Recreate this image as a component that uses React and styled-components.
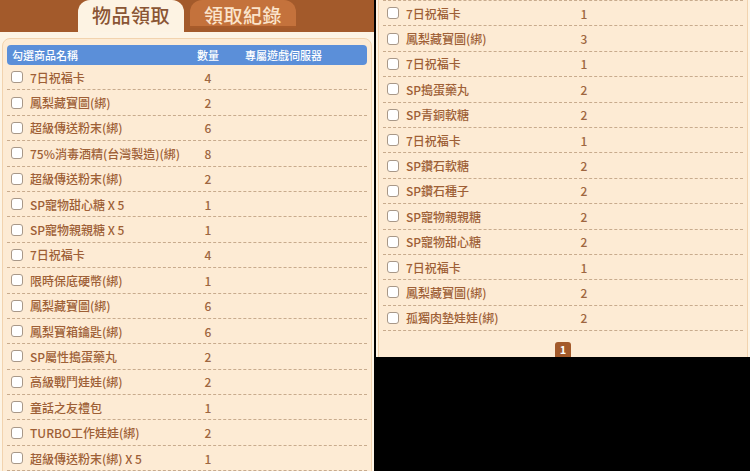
import styled, { createGlobalStyle } from "styled-components"

const GlobalStyle = createGlobalStyle`
  html, body {
    margin: 0;
    padding: 0;
    background: #000;
  }
  body {
    font-family: "Noto Sans CJK TC", "Noto Sans", sans-serif;
  }
`

const firstPage = [
  ["7日祝福卡", 4],
  ["鳳梨藏寶圖(綁)", 2],
  ["超級傳送粉末(綁)", 6],
  ["75%消毒酒精(台灣製造)(綁)", 8],
  ["超級傳送粉末(綁)", 2],
  ["SP寵物甜心糖 X 5", 1],
  ["SP寵物親親糖 X 5", 1],
  ["7日祝福卡", 4],
  ["限時保底硬幣(綁)", 1],
  ["鳳梨藏寶圖(綁)", 6],
  ["鳳梨寶箱鑰匙(綁)", 6],
  ["SP屬性搗蛋藥丸", 2],
  ["高級戰鬥娃娃(綁)", 2],
  ["童話之友禮包", 1],
  ["TURBO工作娃娃(綁)", 2],
  ["超級傳送粉末(綁) X 5", 1],
]

const lastPage = [
  ["7日祝福卡", 1],
  ["鳳梨藏寶圖(綁)", 3],
  ["7日祝福卡", 1],
  ["SP搗蛋藥丸", 2],
  ["SP青銅軟糖", 2],
  ["7日祝福卡", 1],
  ["SP鑽石軟糖", 2],
  ["SP鑽石種子", 2],
  ["SP寵物親親糖", 2],
  ["SP寵物甜心糖", 2],
  ["7日祝福卡", 1],
  ["鳳梨藏寶圖(綁)", 2],
  ["孤獨肉墊娃娃(綁)", 2],
]

const Screen = styled.div`
  width: 750px;
  height: 471px;
  display: flex;
  align-items: flex-start;
  gap: 2px;
  background: #000;
  overflow: hidden;
`

const Pane = styled.div`
  flex: none;
  width: 374px;
  height: ${(p) => p.$height}px;
  overflow: hidden;
  background: #fdf4e5;
`

const TabBar = styled.div`
  height: 32px;
  background: #a35a2b;
  display: flex;
  justify-content: center;
  align-items: flex-start;
  gap: 6px;
`

const Tab = styled.div`
  width: 106px;
  height: ${(p) => (p.$active ? 32 : 28)}px;
  border-radius: 12px 12px 0 0;
  background: ${(p) => (p.$active ? "#fdf3e3" : "#c4723c")};
  color: ${(p) => (p.$active ? "#8a5534" : "#fbe4cb")};
  box-shadow: ${(p) => (p.$active ? "none" : "inset 0 -2px 0 #a85b2a")};
  font-size: 19px;
  font-weight: 500;
  letter-spacing: 0.5px;
  display: flex;
  align-items: center;
  justify-content: center;
  padding-bottom: ${(p) => (p.$active ? 3 : 0)}px;
  box-sizing: border-box;
`

const Body = styled.div`
  padding-top: ${(p) => (p.$continued ? 0 : 6)}px;
`

const Box = styled.div`
  margin: 0 2px;
  border: 1px solid #f2d3ae;
  border-top: ${(p) => (p.$continued ? "none" : "1px solid #f2d3ae")};
  border-radius: ${(p) => (p.$continued ? "0 0 8px 8px" : "8px")};
  background: #fdebd4;
  padding: ${(p) => (p.$continued ? 0 : 6)}px 4px 12px;
`

const HeadBar = styled.div`
  height: 20px;
  background: #5b8fd9;
  border-radius: 4px;
  color: #fff;
  font-size: 11px;
  font-weight: 500;
  display: grid;
  grid-template-columns: 176px 40px 1fr;
  align-items: center;
  padding-left: 5px;
`

const HeadCell = styled.span`
  text-align: ${(p) => (p.$center ? "center" : "left")};
  padding-left: ${(p) => p.$indent || 0}px;
  white-space: nowrap;
`

const List = styled.div`
  border-top: ${(p) => (p.$ruled ? "1px dashed #c8ab8d" : "none")};
`

const Row = styled.div`
  height: 25.4px;
  box-sizing: border-box;
  border-bottom: 1px dashed #c8ab8d;
  display: grid;
  grid-template-columns: 177px 40px 1fr;
  align-items: center;
  padding-left: 4px;
  font-size: 12px;
  font-weight: 500;
  color: #9e5f36;
`

const Name = styled.span`
  display: flex;
  align-items: center;
  gap: 7px;
  white-space: pre;
`

const Check = styled.span`
  width: 10px;
  height: 10px;
  border: 1px solid #a89888;
  border-radius: 3px;
  background: #fff;
  flex: none;
`

const Qty = styled.span`
  text-align: center;
  color: #9e6640;
`

const Pager = styled.div`
  display: flex;
  justify-content: center;
  margin-top: 11px;
`

const PageButton = styled.span`
  width: 16px;
  height: 15px;
  border-radius: 3px 3px 0 0;
  background: #a35a2b;
  color: #fff;
  font-size: 11px;
  line-height: 15px;
  font-weight: bold;
  display: flex;
  align-items: center;
  justify-content: center;
`

const ItemRows = ({ items }) =>
  items.map(([name, qty], i) => (
    <Row key={i}>
      <Name>
        <Check />
        {name}
      </Name>
      <Qty>{qty}</Qty>
    </Row>
  ))

const App = () => {
  return (
    <>
      <GlobalStyle />
      <Screen>
        <Pane $height={471}>
          <TabBar>
            <Tab $active>物品領取</Tab>
            <Tab>領取紀錄</Tab>
          </TabBar>
          <Body>
            <Box>
              <HeadBar>
                <HeadCell>勾選商品名稱</HeadCell>
                <HeadCell $center>數量</HeadCell>
                <HeadCell $indent={17}>專屬遊戲伺服器</HeadCell>
              </HeadBar>
              <List>
                <ItemRows items={firstPage} />
              </List>
            </Box>
          </Body>
        </Pane>
        <Pane $height={357}>
          <Body $continued>
            <Box $continued>
              <List $ruled>
                <ItemRows items={lastPage} />
              </List>
              <Pager>
                <PageButton>1</PageButton>
              </Pager>
            </Box>
          </Body>
        </Pane>
      </Screen>
    </>
  )
}

export default App
